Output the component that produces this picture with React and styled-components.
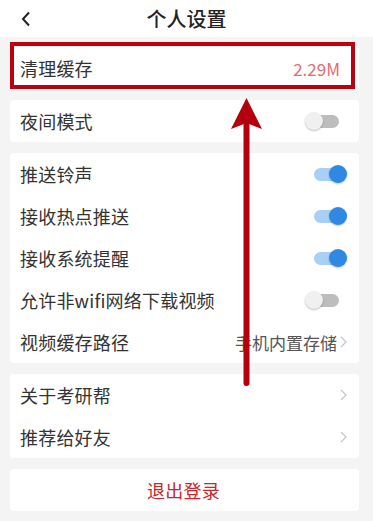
import React, { useState } from 'react';
import styled, { createGlobalStyle } from 'styled-components';

const GlobalStyle = createGlobalStyle`
  html, body {
    margin: 0;
    padding: 0;
    background: #f4f4f4;
  }
  body {
    font-family: "Noto Sans CJK SC", "Noto Sans", sans-serif;
  }
`;

const Page = styled.div`
  position: relative;
  width: 373px;
  min-height: 521px;
  background: #f4f4f4;
  overflow: hidden;
`;

const Header = styled.div`
  position: relative;
  height: 37px;
  background: #ffffff;
  display: flex;
  align-items: center;
  justify-content: center;
`;

const Back = styled.div`
  position: absolute;
  left: 20px;
  top: 11px;
  width: 12px;
  height: 16px;
  display: flex;
  cursor: pointer;
`;

const Title = styled.div`
  font-size: 20px;
  line-height: 37px;
  color: #222222;
  font-weight: 500;
`;

const Content = styled.div`
  display: flex;
  flex-direction: column;
  gap: 11px;
  padding: 10px 14px 0 10px;
`;

const Card = styled.div`
  position: relative;
  background: #ffffff;
  border-radius: 4px;
  display: flex;
  flex-direction: column;
`;

const Row = styled.div`
  height: 42px;
  padding: 0 12px 0 10px;
  display: flex;
  align-items: center;
  justify-content: ${props => (props.$center ? 'center' : 'space-between')};
  cursor: pointer;
`;

const Label = styled.span`
  font-size: 18px;
  color: ${props => props.$color || '#333333'};
  letter-spacing: 0.2px;
`;

const Value = styled.span`
  display: flex;
  align-items: center;
  gap: 3px;
  font-size: 17px;
  color: ${props => props.$color || '#555555'};
  padding-right: ${props => (props.$pad ? '7px' : '0')};
`;

const Highlight = styled.div`
  position: absolute;
  top: -5px;
  left: 0;
  right: 4px;
  bottom: 0;
  border: 4px solid #bb0010;
  pointer-events: none;
`;

const SwitchBox = styled.div`
  position: relative;
  width: 36px;
  height: 20px;
  margin-right: ${props => (props.$on ? '0' : '6px')};
  cursor: pointer;
`;

const Track = styled.div`
  position: absolute;
  top: 4px;
  left: 3px;
  right: 2px;
  height: 13px;
  border-radius: 7px;
  background: ${props => (props.$on ? '#a8d0f6' : '#bdbdbd')};
`;

const Knob = styled.div`
  position: absolute;
  top: 1px;
  ${props => (props.$on ? 'right: 0;' : 'left: 0;')}
  width: 18px;
  height: 18px;
  border-radius: 50%;
  background: ${props => (props.$on ? '#2f89e2' : '#f0f0f0')};
  box-shadow: 0 1px 2px rgba(0, 0, 0, 0.25);
`;

const ArrowMark = styled.svg`
  position: absolute;
  left: 231px;
  top: 98px;
  pointer-events: none;
`;

function Switch({ initial }) {
  const [on, setOn] = useState(initial);
  return (
    <SwitchBox $on={on} onClick={() => setOn(!on)}>
      <Track $on={on} />
      <Knob $on={on} />
    </SwitchBox>
  );
}

function Chevron() {
  return (
    <svg width="7" height="12" viewBox="0 0 7 12">
      <polyline points="1,1 6,6 1,11" fill="none" stroke="#c4c4c4" strokeWidth="1.2" />
    </svg>
  );
}

export default function App() {
  return (
    <Page>
      <GlobalStyle />
      <Header>
        <Back>
          <svg width="12" height="16" viewBox="0 0 12 16">
            <polyline points="9,1.5 3,8 9,14.5" fill="none" stroke="#222" strokeWidth="2" />
          </svg>
        </Back>
        <Title>个人设置</Title>
      </Header>

      <Content>
        <Card>
          <Row>
            <Label>清理缓存</Label>
            <Value $color="#e46c6c" $pad>2.29M</Value>
          </Row>
          <Highlight />
        </Card>

        <Card>
          <Row>
            <Label>夜间模式</Label>
            <Switch initial={false} />
          </Row>
        </Card>

        <Card>
          <Row>
            <Label>推送铃声</Label>
            <Switch initial={true} />
          </Row>
          <Row>
            <Label>接收热点推送</Label>
            <Switch initial={true} />
          </Row>
          <Row>
            <Label>接收系统提醒</Label>
            <Switch initial={true} />
          </Row>
          <Row>
            <Label>允许非wifi网络下载视频</Label>
            <Switch initial={false} />
          </Row>
          <Row>
            <Label>视频缓存路径</Label>
            <Value>手机内置存储<Chevron /></Value>
          </Row>
        </Card>

        <Card>
          <Row>
            <Label>关于考研帮</Label>
            <Chevron />
          </Row>
          <Row>
            <Label>推荐给好友</Label>
            <Chevron />
          </Row>
        </Card>

        <Card>
          <Row $center>
            <Label $color="#c8262c">退出登录</Label>
          </Row>
        </Card>
      </Content>

      <ArrowMark width="32" height="290" viewBox="0 0 32 290">
        <rect x="12.5" y="20" width="6" height="268" rx="3" fill="#b3000c" />
        <polygon points="15.5,0 31,31 15.5,25 0,31" fill="#b3000c" />
      </ArrowMark>
    </Page>
  );
}
